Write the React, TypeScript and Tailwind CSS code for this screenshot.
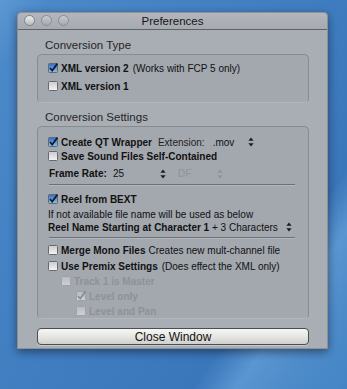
import React from "react";

const font = { fontFamily: '"Liberation Sans", Arial, sans-serif' };

function Check({ checked = false, disabled = false }: { checked?: boolean; disabled?: boolean }) {
  return (
    <svg width="10" height="10" viewBox="0 0 10 10" className="shrink-0">
      <defs>
        <linearGradient id="cbw" x1="0" y1="0" x2="0" y2="1">
          <stop offset="0" stopColor="#c9cbd0" />
          <stop offset="1" stopColor="#f4f4f4" />
        </linearGradient>
        <linearGradient id="cbb" x1="0" y1="0" x2="0" y2="1">
          <stop offset="0" stopColor="#2f6fc4" />
          <stop offset="1" stopColor="#8ac0f2" />
        </linearGradient>
      </defs>
      <rect
        x="0.5"
        y="0.5"
        width="9"
        height="9"
        rx="1"
        fill={checked && !disabled ? "url(#cbb)" : "url(#cbw)"}
        stroke={disabled ? "#9a9da3" : "#66696f"}
        strokeWidth="1"
        opacity={disabled ? 0.55 : 1}
      />
      {checked && (
        <path
          d="M2 5 L4.2 7.6 L9.4 0.6"
          fill="none"
          stroke={disabled ? "#6f7278" : "#101828"}
          strokeWidth="1.6"
          opacity={disabled ? 0.7 : 1}
        />
      )}
    </svg>
  );
}

function Arrows({ disabled = false }: { disabled?: boolean }) {
  const c = disabled ? "#8f939a" : "#1a1a1a";
  return (
    <svg width="6" height="10" viewBox="0 0 6 10" className="shrink-0">
      <path d="M3 0.5 L5.6 3.8 L0.4 3.8 Z" fill={c} />
      <path d="M3 9.5 L5.6 6.2 L0.4 6.2 Z" fill={c} />
    </svg>
  );
}

function Sep() {
  return (
    <div className="ml-[11px] mr-[13px] h-[2px] flex flex-col">
      <div className="h-px bg-[#6c7077]" />
      <div className="h-px bg-[#b3b6bd]" />
    </div>
  );
}

export default function App() {
  return (
    <div
      className="w-[347px] h-[389px] overflow-hidden relative"
      style={{
        ...font,
        background:
          "linear-gradient(125deg, #5c98d2 0%, #4b88c8 8%, #4482c4 30%, #3f7cbf 55%, #3a76ba 75%, #5a96d0 82%, #4d8bc9 90%, #4585c6 100%)",
      }}
    >
      <div className="pt-[12px] pl-[17px]">
        <div className="w-[311px] h-[337px] bg-[#a9adb4] rounded-t-[4px] shadow-[0_3px_10px_rgba(0,0,0,0.45)] flex flex-col border border-[#8d9197]">
          {/* Title bar */}
          <div className="h-[16px] relative flex items-center justify-center bg-gradient-to-b from-[#b3b6bc] to-[#a6aab1] rounded-t-[4px]">
            <div className="absolute left-[6px] top-[2px] flex gap-[6px]">
              <div className="w-[11px] h-[11px] rounded-full bg-gradient-to-b from-[#eeeeee] to-[#b8bbc0] border border-[#80848a]" />
              <div className="w-[11px] h-[11px] rounded-full bg-gradient-to-b from-[#c8cacf] to-[#a6a9ae] border border-[#8a8e94]" />
              <div className="w-[11px] h-[11px] rounded-full bg-gradient-to-b from-[#c8cacf] to-[#a6a9ae] border border-[#8a8e94]" />
            </div>
            <span className="text-[11.5px] text-[#161616] leading-none mt-[1px]">Preferences</span>
          </div>
          <div className="h-px bg-[#5f6369]" />

          {/* Conversion Type */}
          <div className="ml-[27px] mt-[9px] h-[13px] flex items-center text-[11.5px] text-[#262626]">
            Conversion Type
          </div>
          <div className="ml-[19px] mt-[2px] w-[272px] h-[49px] rounded-[5px] bg-[#a3a7ae] border border-[#878b92] border-b-[#b2b5bb] pt-[4px] pl-[10px] flex flex-col">
            <div className="h-[18px] flex items-center text-[10px] text-[#111]">
              <Check checked />
              <span className="ml-[3px] font-bold">XML version 2</span>
              <span className="ml-[4px]">(Works with FCP 5 only)</span>
            </div>
            <div className="h-[18px] flex items-center text-[10px] text-[#111]">
              <Check />
              <span className="ml-[3px] font-bold">XML version 1</span>
            </div>
          </div>

          {/* Conversion Settings */}
          <div className="ml-[27px] mt-[8px] h-[13px] flex items-center text-[11.5px] text-[#262626]">
            Conversion Settings
          </div>
          <div className="ml-[19px] mt-[2px] w-[272px] h-[193px] rounded-[5px] bg-[#a3a7ae] border border-[#878b92] border-b-[#b2b5bb] pt-[8px] flex flex-col text-[10px] text-[#111]">
            <div className="h-[14px] flex items-center pl-[10px]">
              <Check checked />
              <span className="ml-[3px] font-bold">Create QT Wrapper</span>
              <span className="ml-[6px] text-[#222]">Extension:</span>
              <span className="ml-[8px] w-[41px] flex items-center justify-between">
                <span>.mov</span>
                <Arrows />
              </span>
            </div>
            <div className="h-[14px] flex items-center pl-[10px]">
              <Check />
              <span className="ml-[3px] font-bold">Save Sound Files Self-Contained</span>
            </div>
            <div className="h-[22px] flex items-center pl-[11px]">
              <span className="w-[64px] font-bold">Frame Rate:</span>
              <span className="w-[53px] flex items-center justify-between">
                <span>25</span>
                <Arrows />
              </span>
              <span className="ml-[12px] w-[45px] flex items-center justify-between text-[#8f939a]">
                <span>DF</span>
                <Arrows disabled />
              </span>
            </div>
            <Sep />
            <div className="mt-[6px] h-[14px] flex items-center pl-[10px]">
              <Check checked />
              <span className="ml-[3px] font-bold">Reel from BEXT</span>
            </div>
            <div className="mt-[2px] h-[12px] flex items-center pl-[10px]">
              If not available file name will be used as below
            </div>
            <div className="mt-[1px] h-[12px] flex items-center pl-[10px] pr-[16px] justify-between">
              <span>
                <span className="font-bold">Reel Name Starting at Character 1</span>
                <span> + 3 Characters</span>
              </span>
              <Arrows />
            </div>
            <div className="mt-[4px]">
              <Sep />
            </div>
            <div className="mt-[4px] h-[14px] flex items-center pl-[10px]">
              <Check />
              <span className="ml-[3px] font-bold">Merge Mono Files</span>
              <span className="ml-[3px]">Creates new mult-channel file</span>
            </div>
            <div className="mt-[2px] h-[14px] flex items-center pl-[10px]">
              <Check />
              <span className="ml-[3px] font-bold">Use Premix Settings</span>
              <span className="ml-[4px]">(Does effect the XML only)</span>
            </div>
            <div className="mt-[1px] h-[14px] flex items-center pl-[23px] text-[#8e9299]">
              <Check disabled />
              <span className="ml-[3px] font-bold">Track 1 is Master</span>
            </div>
            <div className="mt-[1px] h-[14px] flex items-center pl-[38px] text-[#8e9299]">
              <Check checked disabled />
              <span className="ml-[3px] font-bold">Level only</span>
            </div>
            <div className="mt-[1px] h-[14px] flex items-center pl-[38px] text-[#8e9299]">
              <Check disabled />
              <span className="ml-[3px] font-bold">Level and Pan</span>
            </div>
          </div>

          {/* Button */}
          <div className="ml-[19px] mt-[9px] w-[272px] h-[17px] rounded-[4px] border border-[#4a4d52] bg-gradient-to-b from-[#f6f6f4] via-[#e6e6e3] to-[#cfd0cd] flex items-center justify-center shadow-[0_1px_0_rgba(255,255,255,0.35)]">
            <span className="text-[12px] text-[#111] leading-none">Close Window</span>
          </div>
        </div>
      </div>
    </div>
  );
}
